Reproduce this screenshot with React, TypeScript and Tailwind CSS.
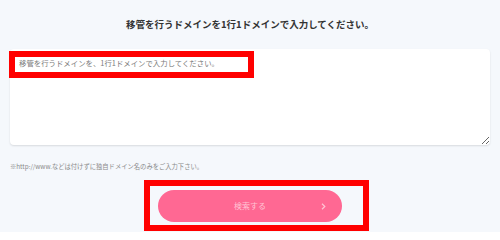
import React from "react";

export default function App() {
  return (
    <div
      className="relative w-[500px] h-[232px] overflow-hidden bg-[#f5f8fc]"
      style={{ fontFamily: '"Noto Sans CJK JP", "Noto Sans", sans-serif' }}
    >
      <h1 className="pt-[17px] text-center text-[9.5px] leading-[14px] font-bold text-[#333]">
        移管を行うドメインを1行1ドメインで入力してください。
      </h1>
      <div className="mt-[18px] px-[10px]">
        <textarea
          className="block w-[480px] h-[96px] rounded-[4px] bg-white pl-[9px] pt-[9px] text-[7.4px] leading-[10px] text-[#333] placeholder:text-[#7a7a7a] shadow-[0_1px_2px_rgba(0,0,0,0.12)] outline-none"
          placeholder="移管を行うドメインを、1行1ドメインで入力してください。"
        />
      </div>
      <p className="mt-[17px] px-[10px] text-[6.3px] leading-[10px] text-[#8a8a8a]">
        ※http://www.などは付けずに独自ドメイン名のみをご入力下さい。
      </p>
      <div className="mt-[18px] flex justify-center">
        <button className="relative flex h-[32px] w-[184px] items-center justify-center rounded-full bg-[#ff6893] text-[8px] text-[#ffc4d4]">
          検索する
          <svg
            className="absolute left-[163px] top-[13px]"
            width="5"
            height="7"
            viewBox="0 0 5 7"
            fill="none"
          >
            <path d="M1 0.8 L3.8 3.5 L1 6.2" stroke="#ffc4d4" strokeWidth="1.2" />
          </svg>
        </button>
      </div>
      <div className="absolute left-[9px] top-[51px] h-[27px] w-[245px] border-[6px] border-[#ff0000]" />
      <div className="absolute left-[144px] top-[180px] h-[51px] w-[225px] border-[6px] border-[#ff0000]" />
    </div>
  );
}
